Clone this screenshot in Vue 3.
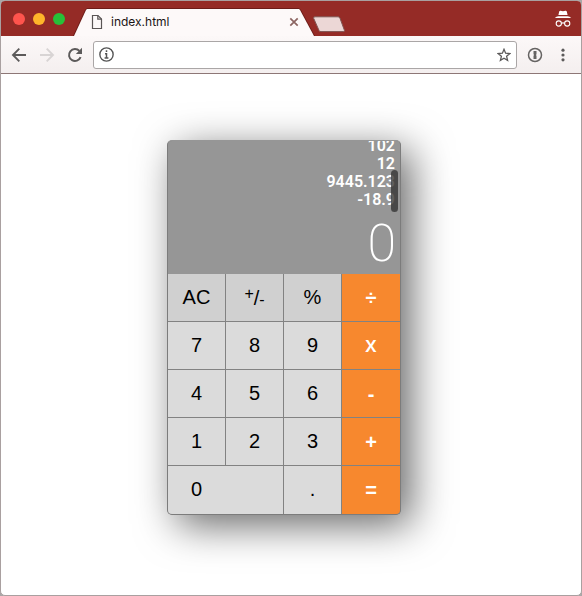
<script setup>
import { ref, onMounted } from 'vue'

const keys = [
  { label: 'AC', name: 'All clear', kind: 'fn' },
  { label: '+/-', name: 'Toggle sign', kind: 'fn' },
  { label: '%', name: 'Percent', kind: 'fn' },
  { label: '÷', name: 'Divide', kind: 'op' },
  { label: '7', kind: 'num' },
  { label: '8', kind: 'num' },
  { label: '9', kind: 'num' },
  { label: 'x', name: 'Multiply', kind: 'op' },
  { label: '4', kind: 'num' },
  { label: '5', kind: 'num' },
  { label: '6', kind: 'num' },
  { label: '-', name: 'Subtract', kind: 'op' },
  { label: '1', kind: 'num' },
  { label: '2', kind: 'num' },
  { label: '3', kind: 'num' },
  { label: '+', name: 'Add', kind: 'op' },
  { label: '0', kind: 'num', wide: true },
  { label: '.', name: 'Decimal point', kind: 'num' },
  { label: '=', name: 'Equals', kind: 'op' },
]

const history = ref(['102', '12', '9445.123', '-18.9'])
const entry = ref('0')
const stored = ref(null)
const pending = ref(null)
const fresh = ref(true)
const address = ref('')
const tape = ref(null)

onMounted(() => {
  tape.value.scrollTop = tape.value.scrollHeight
})

function apply(a, b, op) {
  if (op === '+') return a + b
  if (op === '-') return a - b
  if (op === 'x') return a * b
  return a / b
}

function press(key) {
  const k = key.label
  if (key.kind === 'num') {
    if (k === '.' && entry.value.includes('.') && !fresh.value) return
    entry.value = fresh.value ? (k === '.' ? '0.' : k) : entry.value + k
    fresh.value = false
  } else if (k === 'AC') {
    entry.value = '0'
    stored.value = null
    pending.value = null
    fresh.value = true
  } else if (k === '+/-') {
    entry.value = String(-Number(entry.value))
  } else if (k === '%') {
    entry.value = String(Number(entry.value) / 100)
  } else {
    const n = Number(entry.value)
    const result = pending.value ? apply(stored.value, n, pending.value) : n
    stored.value = result
    entry.value = String(result)
    pending.value = k === '=' ? null : k
    if (k === '=') history.value.push(String(result))
    fresh.value = true
  }
}
</script>

<template>
  <div class="window">
    <header class="titlebar">
      <div class="lights">
        <button class="light close" aria-label="Close window"></button>
        <button class="light minimise" aria-label="Minimise window"></button>
        <button class="light zoom" aria-label="Zoom window"></button>
      </div>
      <div class="tab">
        <svg class="page-icon" width="12" height="16" viewBox="0 0 12 16" fill="none" stroke="#5a5555" stroke-width="1.2">
          <path d="M1.5 1.5H7L10.5 5V14.5H1.5Z" />
          <path d="M6.8 1.5V5.2H10.5" />
        </svg>
        <span class="tab-title">index.html</span>
        <button class="tab-close" aria-label="Close tab">
          <svg width="10" height="10" viewBox="0 0 10 10" stroke="#8c6562" stroke-width="1.7">
            <path d="M1.3 1.3L8.7 8.7M8.7 1.3L1.3 8.7" />
          </svg>
        </button>
      </div>
      <button class="new-tab" aria-label="New tab">
        <svg width="34" height="17" viewBox="0 0 34 17">
          <path d="M2 .8H25Q26.3 .8 26.9 2L31.4 14.2Q31.7 15.6 30.4 15.6H8Q6.6 15.6 6 14.4L.6 2.2Q.2 .8 2 .8Z" fill="#ecd7d6" stroke="#7f5552" />
        </svg>
      </button>
      <svg class="incognito" width="18" height="18" viewBox="0 0 18 18" fill="none" stroke="#fff">
        <path d="M5.3 1.2Q5.7.5 6.6.8L9 1.3L11.4.8Q12.3.5 12.7 1.2L13.6 5H4.4Z" fill="#fff" stroke="none" />
        <path d="M.8 8Q2.3 6.2 4.3 6.2H13.7Q15.7 6.2 17.2 8Z" fill="#fff" stroke="none" />
        <circle cx="4.8" cy="13.5" r="2.6" stroke-width="1.1" />
        <circle cx="13.2" cy="13.5" r="2.6" stroke-width="1.1" />
        <path d="M7.3 13.4Q9 12.4 10.7 13.4" stroke-width="1.1" />
      </svg>
    </header>

    <nav class="toolbar" aria-label="Browser">
      <button class="tool" aria-label="Back">
        <svg width="16" height="16" viewBox="0 0 16 16" fill="none" stroke="#5c5a5a" stroke-width="1.9">
          <path d="M15 8H2.5M8.3 1.7L2 8L8.3 14.3" />
        </svg>
      </button>
      <button class="tool" aria-label="Forward">
        <svg width="16" height="16" viewBox="0 0 16 16" fill="none" stroke="#d8d4d4" stroke-width="1.9">
          <path d="M1 8H13.5M7.7 1.7L14 8L7.7 14.3" />
        </svg>
      </button>
      <button class="tool" aria-label="Reload">
        <svg width="16" height="16" viewBox="0 0 16 16" fill="none" stroke="#5c5a5a" stroke-width="2">
          <path d="M13.6 10.2A6 6 0 1 1 12.4 3.9" />
          <path d="M15 .8V7H8.8Z" fill="#5c5a5a" stroke="none" />
        </svg>
      </button>
      <div class="address">
        <svg width="15" height="15" viewBox="0 0 14 14" fill="none" stroke="#555">
          <circle cx="7" cy="7" r="6.2" stroke-width="1.3" />
          <path d="M7 3V4.6M5.6 6.4H7V10.2M5.2 10.2H8.8" stroke-width="1.4" />
        </svg>
        <input v-model="address" class="url" type="text" aria-label="Address" />
        <button class="star" aria-label="Bookmark this page">
          <svg width="14" height="14" viewBox="0 0 14 14" fill="none" stroke="#5c5a5a" stroke-width="1.3">
            <path d="M7 1.3L8.6 5.2L12.9 5.5L9.6 8.3L10.6 12.4L7 10.2L3.4 12.4L4.4 8.3L1.1 5.5L5.4 5.2Z" />
          </svg>
        </button>
      </div>
      <button class="tool" aria-label="Password manager">
        <svg width="16" height="16" viewBox="0 0 16 16" fill="none">
          <circle cx="8" cy="8" r="6.5" stroke="#666463" stroke-width="1.5" />
          <path d="M6.5 4H9.5V7.3L8.9 8L9.5 8.7V12H6.5V8.7L7.1 8L6.5 7.3Z" fill="#666463" />
        </svg>
      </button>
      <button class="tool" aria-label="Menu">
        <svg width="16" height="16" viewBox="0 0 16 16" fill="#5c5a5a">
          <circle cx="8" cy="3.2" r="1.6" />
          <circle cx="8" cy="8" r="1.6" />
          <circle cx="8" cy="12.8" r="1.6" />
        </svg>
      </button>
    </nav>

    <main class="stage">
      <section class="calculator" aria-label="Calculator">
        <div class="display">
          <div ref="tape" class="tape">
            <div v-for="(line, i) in history" :key="i" class="line">{{ line }}</div>
          </div>
          <span class="thumb"></span>
          <output class="entry">{{ entry }}</output>
        </div>
        <div class="keys">
          <button
            v-for="key in keys"
            :key="key.label"
            class="key"
            :class="[key.kind, { wide: key.wide, times: key.label === 'x' }]"
            :aria-label="key.name || key.label"
            @click="press(key)"
          >
            <span v-if="key.label === '+/-'"><span class="plus">+</span>/<span class="minus">-</span></span>
            <span v-else>{{ key.label }}</span>
          </button>
        </div>
      </section>
    </main>
  </div>
</template>

<style>
body {
  background: #a9a6a6;
}
</style>

<style scoped>
* {
  box-sizing: border-box;
}

button {
  margin: 0;
  padding: 0;
  border: 0;
  background: none;
  font: inherit;
  color: inherit;
}

svg {
  display: block;
}

.window {
  display: flex;
  flex-direction: column;
  min-height: 100vh;
  border: 1px solid #a9a0a0;
  border-radius: 5px;
  overflow: hidden;
  background: #fff;
  font-family: "Liberation Sans", sans-serif;
}

.titlebar {
  display: flex;
  align-items: flex-end;
  height: 35px;
  padding-right: 9px;
  background: #952b26;
}

.lights {
  display: flex;
  align-self: center;
  gap: 8px;
  width: 72px;
  padding-left: 12px;
}

.light {
  width: 12px;
  height: 12px;
  border-radius: 50%;
}

.close {
  background: #ff544d;
}

.minimise {
  background: #ffb52a;
}

.zoom {
  background: #27c138;
}

.tab {
  position: relative;
  z-index: 0;
  display: flex;
  align-items: center;
  width: 242px;
  height: 28px;
  padding: 0 16px 0 18px;
  background: #6c1c18;
  clip-path: polygon(0 100%, 12px 2px, 14px 0, 226px 0, 228px 2px, 242px 100%);
}

.tab::before {
  content: "";
  position: absolute;
  z-index: -1;
  inset: 1px 0 0;
  background: #fdf9f9;
  clip-path: polygon(1px 100%, 13px 1px, 14px 0, 226px 0, 227px 1px, 241px 100%);
}

.tab-title {
  flex: 1;
  margin-left: 8px;
  font: 12px/16px Inter, sans-serif;
  color: #1b1414;
}

.new-tab {
  align-self: center;
  margin-top: 12px;
  margin-left: -2px;
}

.incognito {
  align-self: center;
  margin-left: auto;
}

.toolbar {
  display: flex;
  align-items: center;
  gap: 12px;
  height: 38px;
  padding: 0 10px;
  border-bottom: 1px solid #8d7776;
  background: linear-gradient(#fcf8f8, #f4efef);
}

.address {
  display: flex;
  flex: 1;
  align-items: center;
  gap: 6px;
  height: 28px;
  margin: 0 -2px;
  padding: 0 5px;
  border: 1px solid #aaa6a6;
  border-radius: 3px;
  background: #fff;
}

.url {
  flex: 1;
  min-width: 0;
  height: 24px;
  padding: 0;
  border: 0;
  outline: 0;
  background: none;
  font: 14px/20px "Liberation Sans", sans-serif;
}

.stage {
  display: flex;
  flex: 1;
  align-items: center;
  justify-content: center;
  padding: 0 14px 14px 0;
}

.calculator {
  width: 234px;
  border: 1px solid #7c7c7c;
  border-top-color: #969696;
  border-radius: 5px;
  overflow: hidden;
  background: #828282;
  box-shadow: 10px 10px 40px rgba(0, 0, 0, 0.6);
}

.display {
  position: relative;
  display: flex;
  flex-direction: column;
  background: #969696;
  color: #fff;
  font-family: Roboto, sans-serif;
  text-align: right;
}

.tape {
  height: 68px;
  padding-right: 5px;
  overflow: auto;
  scrollbar-width: none;
}

.line {
  font-size: 16px;
  font-weight: 600;
  line-height: 18px;
}

.thumb {
  position: absolute;
  top: 29px;
  right: 2px;
  width: 7px;
  height: 42px;
  border-radius: 4px;
  background: rgba(50, 50, 50, 0.78);
}

.entry {
  padding: 5px 4px 0 0;
  font-size: 52px;
  font-weight: 200;
  line-height: 60px;
}

.keys {
  display: grid;
  grid-template-columns: repeat(4, 1fr);
}

.key {
  height: 48px;
  padding-bottom: 2px;
  border-right: 1px solid #828282;
  border-bottom: 1px solid #828282;
  background: #dbdbdb;
  font-size: 20px;
  line-height: 24px;
  color: #000;
}

.fn {
  background: #d0d0d0;
}

.op {
  padding-bottom: 0;
  border-right: 0;
  background: #f7882e;
  color: #fff;
  font-weight: 700;
}

.times {
  padding-bottom: 4px;
  font-family: Inter, sans-serif;
  font-size: 22px;
  font-weight: 500;
}

.wide {
  grid-column: span 2;
  padding-left: 23px;
  text-align: left;
}

.key:nth-last-child(-n + 3) {
  border-bottom: 0;
}

.plus,
.minus {
  font-size: 16px;
}

.plus {
  vertical-align: 6px;
}
</style>
